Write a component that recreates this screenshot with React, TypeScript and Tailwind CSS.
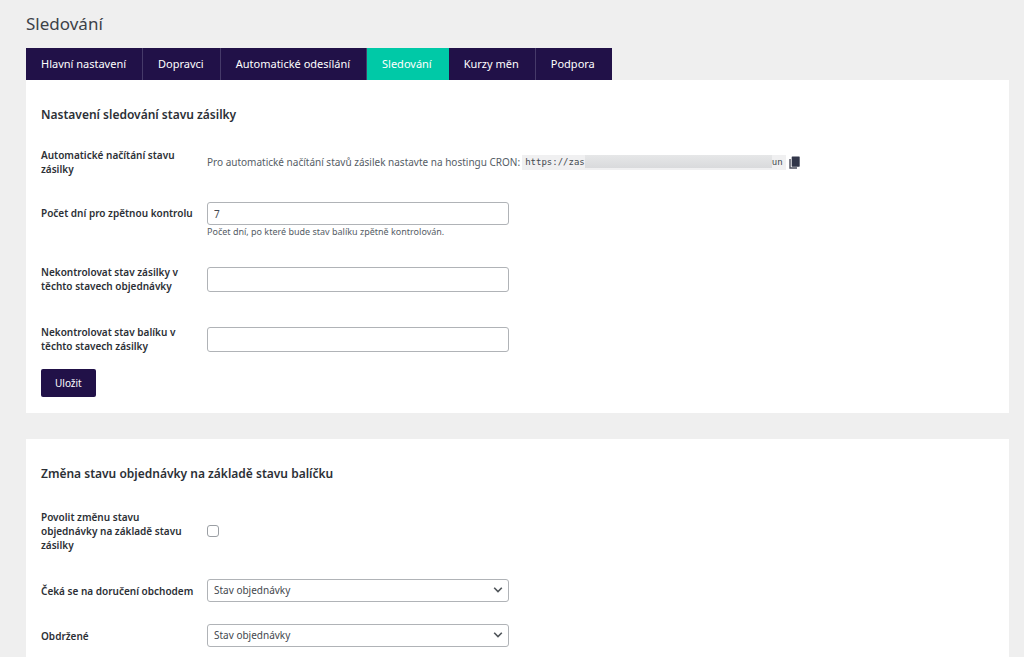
import type { ReactNode } from 'react';

const tabs = [
  'Hlavní nastavení',
  'Dopravci',
  'Automatické odesílání',
  'Sledování',
  'Kurzy měn',
  'Podpora',
];

function Tabs({ active }: { active: string }) {
  return (
    <nav className="flex flex-wrap">
      {tabs.map((tab) => (
        <a
          key={tab}
          href="#"
          aria-current={tab === active ? 'page' : undefined}
          className={
            tab === active
              ? 'border-r border-[#00c9a7] bg-[#00c9a7] py-1.5 pr-4 pl-[15px] text-[11px] leading-5 text-white'
              : 'border-r border-[#463a69] bg-[#211148] py-1.5 pr-4 pl-[15px] text-[11px] leading-5 text-white last:border-[#211148]'
          }
        >
          {tab}
        </a>
      ))}
    </nav>
  );
}

function Card({ title, children }: { title: string; children: ReactNode }) {
  return (
    <section className="bg-white px-[15px] pt-6 pb-4">
      <h2 className="text-[12px] leading-[22px] font-semibold text-[#2c3036]">{title}</h2>
      {children}
    </section>
  );
}

const rowClass = 'grid grid-cols-[150px_minmax(0,1fr)] gap-x-4';
const labelClass = 'text-[10px] leading-[14px] font-semibold text-[#2c3036]';
const fieldClass =
  'block w-full max-w-[302px] rounded-[3px] border border-[#b0b3b7] bg-white text-[10px] text-[#43484e]';

function SelectRow({ id, label }: { id: string; label: string }) {
  return (
    <div className={`${rowClass} items-center py-[11px]`}>
      <label htmlFor={id} className={`${labelClass} whitespace-nowrap`}>
        {label}
      </label>
      <div className="relative max-w-[302px]">
        <select id={id} className={`${fieldClass} h-[23px] appearance-none pr-6 pl-1.5`}>
          <option>Stav objednávky</option>
        </select>
        <svg
          viewBox="0 0 10 6"
          className="pointer-events-none absolute top-2 right-1.5 h-1.5 w-2.5"
          fill="none"
          stroke="#50555a"
          strokeWidth="1.6"
          aria-hidden="true"
        >
          <path d="M1.2 0.8 L5 4.6 L8.8 0.8" />
        </svg>
      </div>
    </div>
  );
}

export default function App() {
  return (
    <main className="h-screen overflow-hidden bg-[#efefef] pt-3 pr-[15px] pl-[26px] font-['Noto_Sans','Open_Sans',sans-serif]">
      <h1 className="mb-3 text-[17px] leading-6 text-[#3c4147]">Sledování</h1>
      <Tabs active="Sledování" />

      <Card title="Nastavení sledování stavu zásilky">
        <div className={`${rowClass} mt-2.5 items-center py-3`}>
          <span className={labelClass}>Automatické načítání stavu zásilky</span>
          <div className="flex items-center text-[10px] leading-[14px] text-[#555d66]">
            <span className="whitespace-nowrap">
              Pro automatické načítání stavů zásilek nastavte na hostingu CRON:
            </span>
            <code className="ml-0.5 flex h-[15px] items-center bg-[#f0f0f1] px-[3px] font-['DejaVu_Sans_Mono',monospace] text-[9px] text-[#444a50]">
              https://zas
              <span className="h-[13px] w-[187px] self-start bg-linear-to-b from-[#e6e7e8] to-[#d9dadc]" />
              un
            </code>
            <button type="button" aria-label="Kopírovat" className="ml-[3px]">
              <svg viewBox="0 0 11 13" className="h-[13px] w-[11px]" aria-hidden="true">
                <path d="M1 3 V12 H8" fill="none" stroke="#4b4d5c" strokeWidth="1.4" />
                <rect x="2.7" y="0.5" width="8" height="10.2" rx="0.6" fill="#32374a" />
              </svg>
            </button>
          </div>
        </div>

        <div className={`${rowClass} pt-3.5 pb-2.5`}>
          <label htmlFor="days" className={`${labelClass} pt-1 whitespace-nowrap`}>
            Počet dní pro zpětnou kontrolu
          </label>
          <div>
            <input id="days" type="text" defaultValue="7" className={`${fieldClass} h-[23px] px-1.5`} />
            <p className="text-[9px] leading-[14px] text-[#555d66]">
              Počet dní, po které bude stav balíku zpětně kontrolován.
            </p>
          </div>
        </div>

        <div className={`${rowClass} items-center py-4`}>
          <label htmlFor="order-states" className={labelClass}>
            Nekontrolovat stav zásilky v těchto stavech objednávky
          </label>
          <input id="order-states" type="text" className={`${fieldClass} h-[25px] px-1.5`} />
        </div>

        <div className={`${rowClass} items-center py-4`}>
          <label htmlFor="parcel-states" className={labelClass}>
            Nekontrolovat stav balíku v těchto stavech zásilky
          </label>
          <input id="parcel-states" type="text" className={`${fieldClass} h-[25px] px-1.5`} />
        </div>

        <button
          type="button"
          className="block rounded-[2px] bg-[#211148] px-3.5 py-[7px] text-[10px] leading-[14px] text-white"
        >
          Uložit
        </button>
      </Card>

      <div className="mt-[26px]">
        <Card title="Změna stavu objednávky na základě stavu balíčku">
          <div className={`${rowClass} mt-[9px] items-center py-4`}>
            <label htmlFor="enable" className={labelClass}>
              Povolit změnu stavu objednávky na základě stavu zásilky
            </label>
            <input
              id="enable"
              type="checkbox"
              className="h-3 w-3 appearance-none rounded-[3px] border border-[#9b9fa4] bg-white checked:bg-[#211148]"
            />
          </div>
          <SelectRow id="waiting" label="Čeká se na doručení obchodem" />
          <SelectRow id="received" label="Obdržené" />
        </Card>
      </div>
    </main>
  );
}
